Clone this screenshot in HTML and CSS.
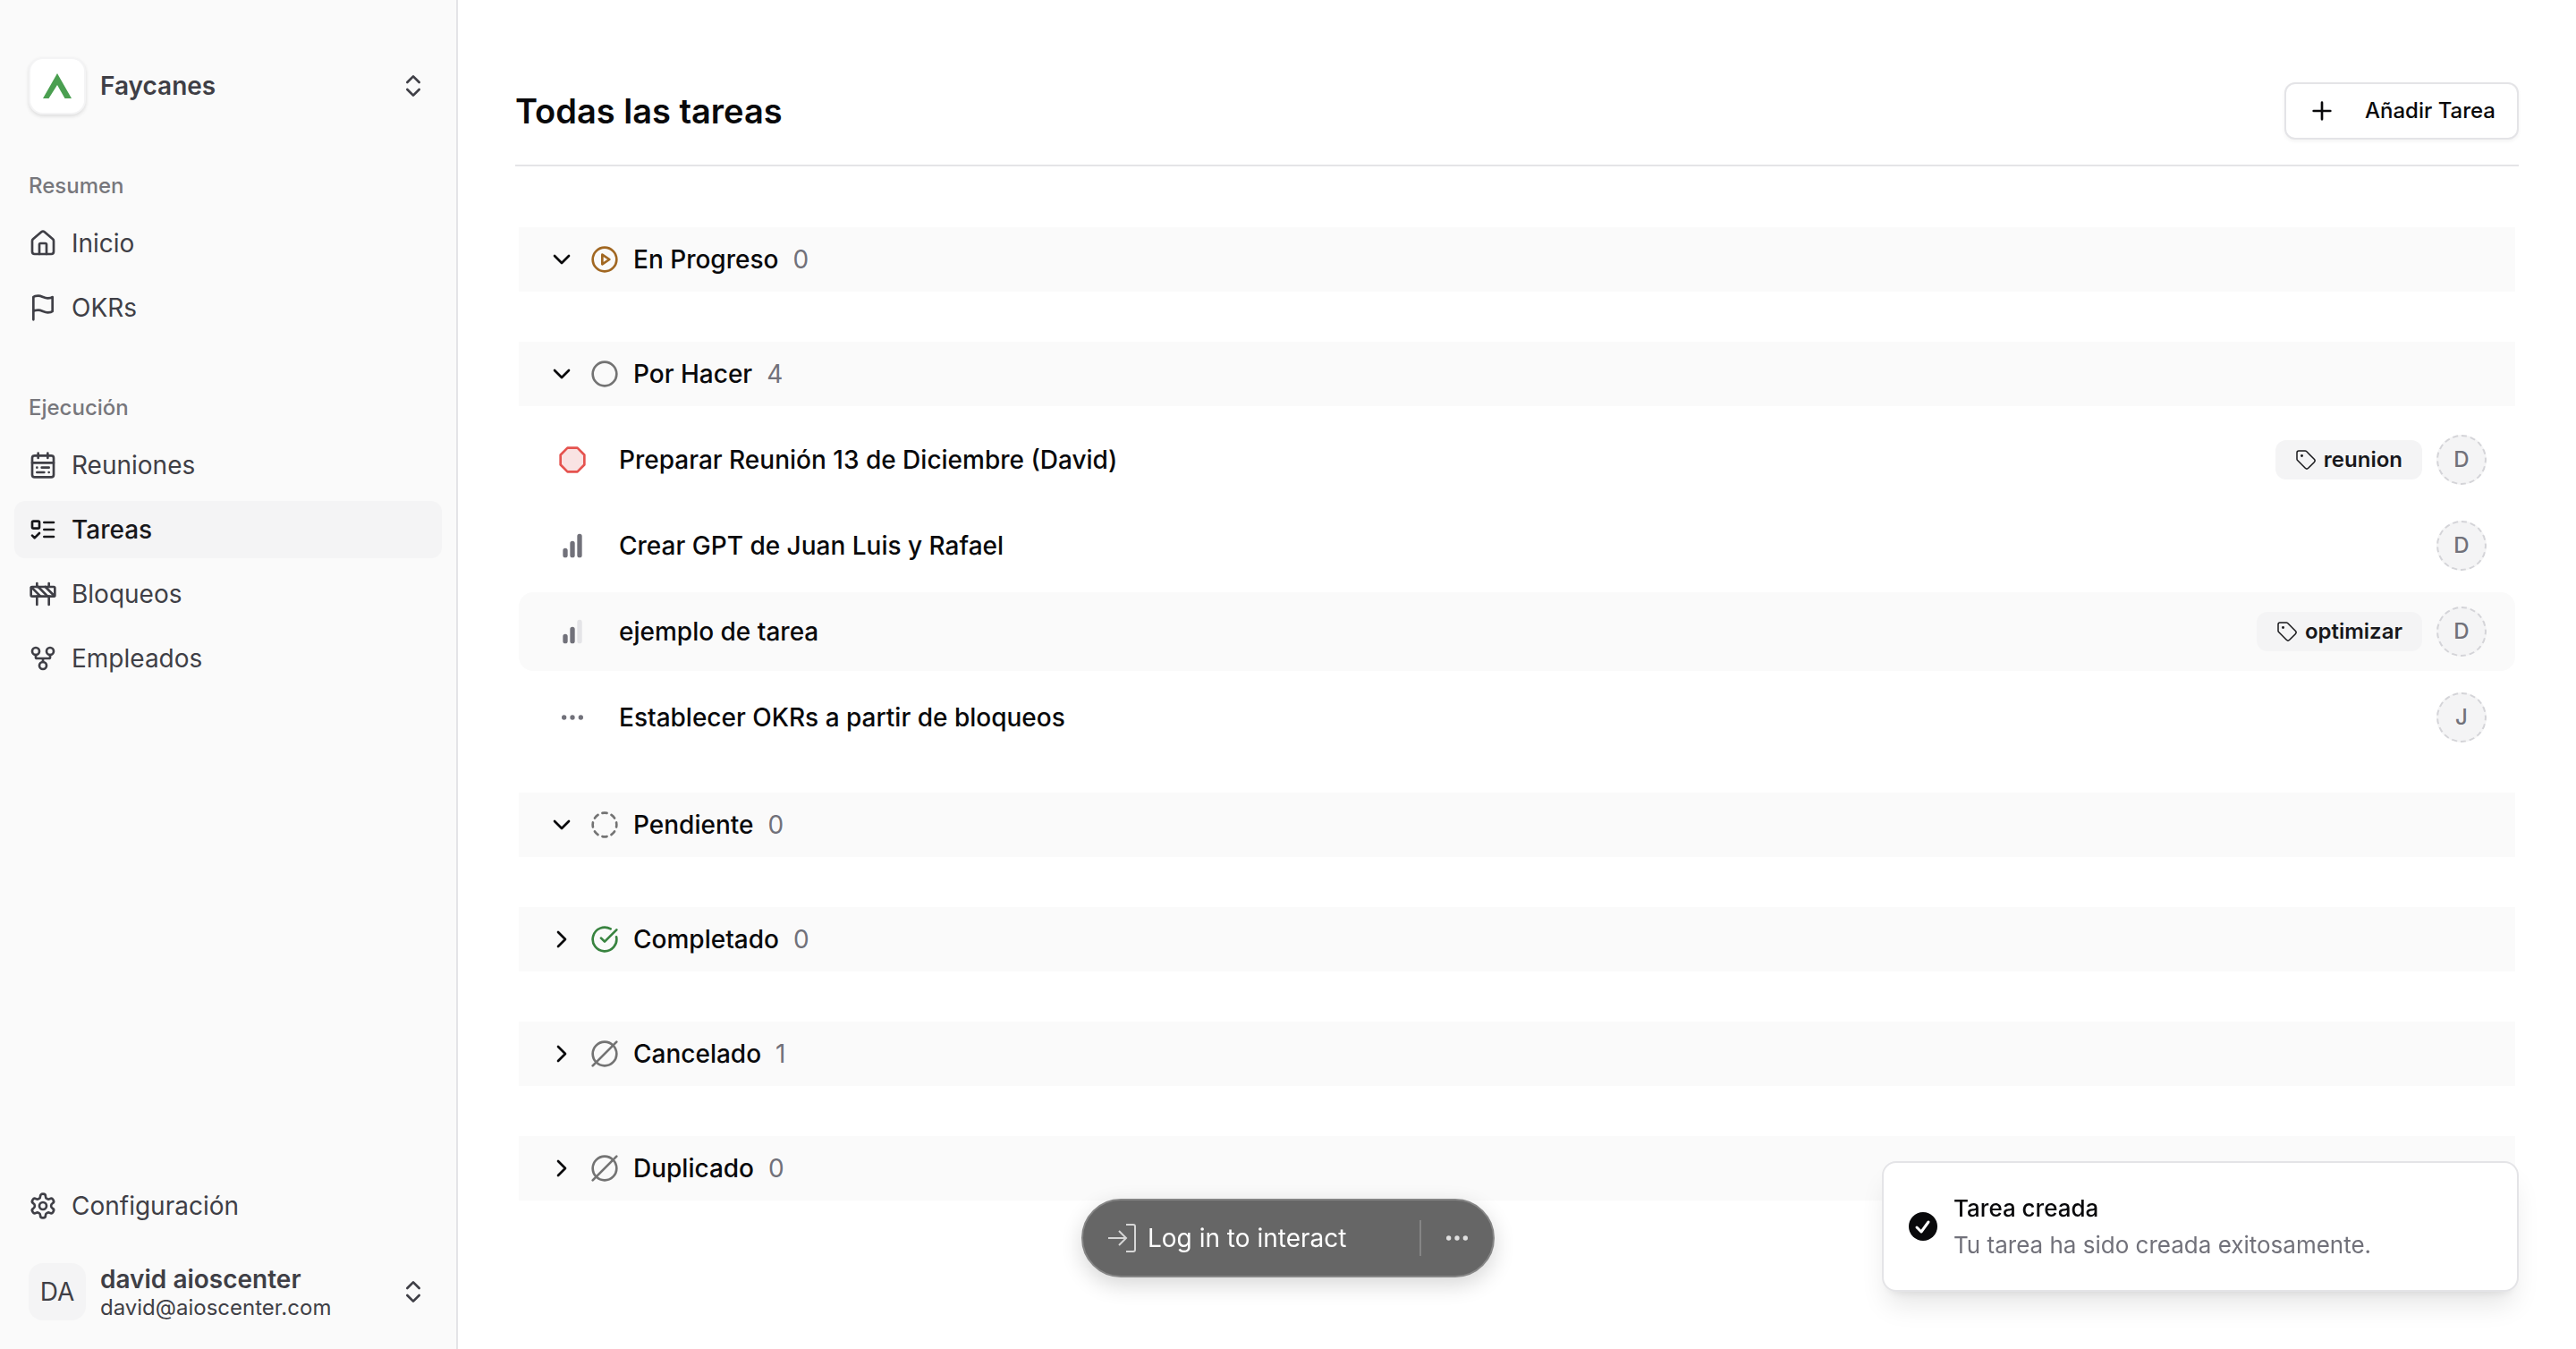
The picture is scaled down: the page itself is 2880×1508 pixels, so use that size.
FILE: index.html
```html
<!DOCTYPE html>
<html lang="es">
<head>
    <meta charset="UTF-8">
    <meta name="viewport" content="width=device-width, initial-scale=1.0">
    <title>Todas las tareas</title>
    <link rel="stylesheet" href="styles.css">
</head>
<body>
    <!-- Icon sprite -->
    <svg class="sprite" aria-hidden="true">
        <symbol id="i-updown" viewBox="0 0 24 24"><path d="m7 15 5 5 5-5M7 9l5-5 5 5"/></symbol>
        <symbol id="i-home" viewBox="0 0 24 24"><path d="M15 21v-8a1 1 0 0 0-1-1h-4a1 1 0 0 0-1 1v8"/><path d="M3 10a2 2 0 0 1 .709-1.528l7-5.999a2 2 0 0 1 2.582 0l7 5.999A2 2 0 0 1 21 10v9a2 2 0 0 1-2 2H5a2 2 0 0 1-2-2z"/></symbol>
        <symbol id="i-flag" viewBox="0 0 24 24"><path d="M4 15s1-1 4-1 5 2 8 2 4-1 4-1V3s-1 1-4 1-5-2-8-2-4 1-4 1zM4 22v-7"/></symbol>
        <symbol id="i-calendar" viewBox="0 0 24 24"><rect x="3" y="4" width="18" height="18" rx="2"/><path d="M16 2v4M3 10h18M8 2v4M17 14h-6M13 18H7M7 14h.01M17 18h.01"/></symbol>
        <symbol id="i-todo" viewBox="0 0 24 24"><rect x="3" y="5" width="6" height="6" rx="1"/><path d="m3 17 2 2 4-4M13 6h8M13 12h8M13 18h8"/></symbol>
        <symbol id="i-barrier" viewBox="0 0 24 24"><rect x="2" y="6" width="20" height="8" rx="1"/><path d="M17 14v7M7 14v7M17 3v3M7 3v3M10 14 2.3 6.3M14 6l7.7 7.7M8 6l8 8"/></symbol>
        <symbol id="i-fork" viewBox="0 0 24 24"><circle cx="12" cy="18" r="3"/><circle cx="6" cy="6" r="3"/><circle cx="18" cy="6" r="3"/><path d="M18 9v2c0 .6-.4 1-1 1H7c-.6 0-1-.4-1-1V9M12 12v3"/></symbol>
        <symbol id="i-gear" viewBox="0 0 24 24"><path d="M12.22 2h-.44a2 2 0 0 0-2 2v.18a2 2 0 0 1-1 1.73l-.43.25a2 2 0 0 1-2 0l-.15-.08a2 2 0 0 0-2.73.73l-.22.38a2 2 0 0 0 .73 2.73l.15.1a2 2 0 0 1 1 1.72v.51a2 2 0 0 1-1 1.74l-.15.09a2 2 0 0 0-.73 2.73l.22.38a2 2 0 0 0 2.73.73l.15-.08a2 2 0 0 1 2 0l.43.25a2 2 0 0 1 1 1.73V20a2 2 0 0 0 2 2h.44a2 2 0 0 0 2-2v-.18a2 2 0 0 1 1-1.73l.43-.25a2 2 0 0 1 2 0l.15.08a2 2 0 0 0 2.73-.73l.22-.39a2 2 0 0 0-.73-2.73l-.15-.08a2 2 0 0 1-1-1.74v-.5a2 2 0 0 1 1-1.74l.15-.09a2 2 0 0 0 .73-2.73l-.22-.38a2 2 0 0 0-2.73-.73l-.15.08a2 2 0 0 1-2 0l-.43-.25a2 2 0 0 1-1-1.73V4a2 2 0 0 0-2-2z"/><circle cx="12" cy="12" r="3"/></symbol>
        <symbol id="i-plus" viewBox="0 0 24 24"><path d="M5 12h14M12 5v14"/></symbol>
        <symbol id="i-down" viewBox="0 0 24 24"><path d="m6 9 6 6 6-6"/></symbol>
        <symbol id="i-right" viewBox="0 0 24 24"><path d="m9 18 6-6-6-6"/></symbol>
        <symbol id="i-play" viewBox="0 0 24 24"><circle cx="12" cy="12" r="10"/><path d="m10 8 6 4-6 4z"/></symbol>
        <symbol id="i-circle" viewBox="0 0 24 24"><circle cx="12" cy="12" r="10"/></symbol>
        <symbol id="i-dashed" viewBox="0 0 24 24"><path d="M10.1 2.182a10 10 0 0 1 3.8 0M13.9 21.818a10 10 0 0 1-3.8 0M17.609 3.721a10 10 0 0 1 2.69 2.7M2.182 13.9a10 10 0 0 1 0-3.8M20.279 17.609a10 10 0 0 1-2.7 2.69M21.818 10.1a10 10 0 0 1 0 3.8M3.721 6.391a10 10 0 0 1 2.7-2.69M6.391 20.279a10 10 0 0 1-2.69-2.7"/></symbol>
        <symbol id="i-check" viewBox="0 0 24 24"><path d="M21.801 10A10 10 0 1 1 17 3.335M9 11l3 3L22 4"/></symbol>
        <symbol id="i-slash" viewBox="0 0 24 24"><circle cx="12" cy="12" r="10"/><path d="M22 2 2 22"/></symbol>
        <symbol id="i-octagon" viewBox="0 0 24 24"><path d="M7.86 2h8.28L22 7.86v8.28L16.14 22H7.86L2 16.14V7.86z"/></symbol>
        <symbol id="i-dots" viewBox="0 0 24 24"><circle cx="12" cy="12" r="1"/><circle cx="19" cy="12" r="1"/><circle cx="5" cy="12" r="1"/></symbol>
        <symbol id="i-tag" viewBox="0 0 24 24"><path d="M12.586 2.586A2 2 0 0 0 11.172 2H4a2 2 0 0 0-2 2v7.172a2 2 0 0 0 .586 1.414l8.704 8.704a2.426 2.426 0 0 0 3.42 0l6.58-6.58a2.426 2.426 0 0 0 0-3.42z"/><circle cx="7.5" cy="7.5" r=".7" fill="currentColor"/></symbol>
    </svg>

    <div class="app">
        <aside class="sidebar">
            <button class="switcher" type="button">
                <span class="logo">
                    <svg width="32" height="28" viewBox="0 0 32 28"><path fill="#4a9f50" d="M16 0 32 28h-7.500L16 13 6.500 28H0z"/></svg>
                </span>
                <span class="switcher-name">Faycanes</span>
                <svg class="icon"><use href="#i-updown"/></svg>
            </button>

            <nav class="nav-group">
                <h2 class="nav-label">Resumen</h2>
                <a class="nav-item" href="#inicio"><svg class="icon"><use href="#i-home"/></svg>Inicio</a>
                <a class="nav-item" href="#okrs"><svg class="icon"><use href="#i-flag"/></svg>OKRs</a>
            </nav>
            <nav class="nav-group">
                <h2 class="nav-label">Ejecución</h2>
                <a class="nav-item" href="#reuniones"><svg class="icon"><use href="#i-calendar"/></svg>Reuniones</a>
                <a class="nav-item active" href="#tareas" aria-current="page"><svg class="icon"><use href="#i-todo"/></svg>Tareas</a>
                <a class="nav-item" href="#bloqueos"><svg class="icon"><use href="#i-barrier"/></svg>Bloqueos</a>
                <a class="nav-item" href="#empleados"><svg class="icon"><use href="#i-fork"/></svg>Empleados</a>
            </nav>

            <nav class="nav-group nav-bottom">
                <a class="nav-item" href="#configuracion"><svg class="icon"><use href="#i-gear"/></svg>Configuración</a>
            </nav>
            <button class="switcher" type="button">
                <span class="initials">DA</span>
                <span class="user">
                    <span class="switcher-name">david aioscenter</span>
                    <span class="user-email">david@aioscenter.com</span>
                </span>
                <svg class="icon"><use href="#i-updown"/></svg>
            </button>
        </aside>

        <main class="main">
            <header class="page-header">
                <h1>Todas las tareas</h1>
                <button class="add-btn" type="button"><svg class="icon"><use href="#i-plus"/></svg>Añadir Tarea</button>
            </header>

            <div class="board">
                <section class="group">
                    <button class="group-header" type="button" aria-expanded="true">
                        <svg class="icon"><use href="#i-down"/></svg>
                        <svg class="icon status-progress"><use href="#i-play"/></svg>
                        <span>En Progreso</span><span class="count">0</span>
                    </button>
                </section>

                <section class="group">
                    <button class="group-header" type="button" aria-expanded="true">
                        <svg class="icon"><use href="#i-down"/></svg>
                        <svg class="icon status-muted"><use href="#i-circle"/></svg>
                        <span>Por Hacer</span><span class="count">4</span>
                    </button>
                    <ul class="tasks">
                        <li class="task">
                            <button class="priority" type="button" aria-label="Urgente"><svg class="icon urgent"><use href="#i-octagon"/></svg></button>
                            <span class="task-title">Preparar Reunión 13 de Diciembre (David)</span>
                            <span class="tag"><svg class="icon"><use href="#i-tag"/></svg>reunion</span>
                            <span class="avatar">D</span>
                        </li>
                        <li class="task">
                            <button class="priority" type="button" aria-label="Alta"><svg class="icon bars" viewBox="0 0 24 24"><path d="M6 20v-4M12 20V10M18 20V4"/></svg></button>
                            <span class="task-title">Crear GPT de Juan Luis y Rafael</span>
                            <span class="avatar">D</span>
                        </li>
                        <li class="task hovered">
                            <button class="priority" type="button" aria-label="Media"><svg class="icon bars" viewBox="0 0 24 24"><path d="M6 20v-4M12 20V10"/><path class="bar-off" d="M18 20V4"/></svg></button>
                            <span class="task-title">ejemplo de tarea</span>
                            <span class="tag"><svg class="icon"><use href="#i-tag"/></svg>optimizar</span>
                            <span class="avatar">D</span>
                        </li>
                        <li class="task">
                            <button class="priority" type="button" aria-label="Sin prioridad"><svg class="icon"><use href="#i-dots"/></svg></button>
                            <span class="task-title">Establecer OKRs a partir de bloqueos</span>
                            <span class="avatar">J</span>
                        </li>
                    </ul>
                </section>

                <section class="group">
                    <button class="group-header" type="button" aria-expanded="true">
                        <svg class="icon"><use href="#i-down"/></svg>
                        <svg class="icon status-muted"><use href="#i-dashed"/></svg>
                        <span>Pendiente</span><span class="count">0</span>
                    </button>
                </section>

                <section class="group">
                    <button class="group-header" type="button" aria-expanded="false">
                        <svg class="icon"><use href="#i-right"/></svg>
                        <svg class="icon status-done"><use href="#i-check"/></svg>
                        <span>Completado</span><span class="count">0</span>
                    </button>
                </section>

                <section class="group">
                    <button class="group-header" type="button" aria-expanded="false">
                        <svg class="icon"><use href="#i-right"/></svg>
                        <svg class="icon status-muted"><use href="#i-slash"/></svg>
                        <span>Cancelado</span><span class="count">1</span>
                    </button>
                </section>

                <section class="group">
                    <button class="group-header" type="button" aria-expanded="false">
                        <svg class="icon"><use href="#i-right"/></svg>
                        <svg class="icon status-muted"><use href="#i-slash"/></svg>
                        <span>Duplicado</span><span class="count">0</span>
                    </button>
                </section>
            </div>
        </main>
    </div>

    <div class="login-bar">
        <button class="login-btn" type="button">
            <svg width="32" height="32" viewBox="0 0 32 32"><path d="M0 16h20M12 8l8 8-8 8M20 1h8a2 2 0 0 1 2 2v26a2 2 0 0 1-2 2h-8"/></svg>
            Log in to interact
        </button>
        <button class="login-more" type="button" aria-label="Más opciones"><svg class="icon"><use href="#i-dots"/></svg></button>
    </div>

    <div class="toast" role="status">
        <svg width="32" height="32" viewBox="0 0 32 32"><circle cx="16" cy="16" r="16" fill="#09090b"/><path d="m9 17 5 5 8-11" fill="none" stroke="#fff" stroke-width="3" stroke-linecap="round" stroke-linejoin="round"/></svg>
        <div class="toast-text">
            <p class="toast-title">Tarea creada</p>
            <p class="toast-desc">Tu tarea ha sido creada exitosamente.</p>
        </div>
    </div>
</body>
</html>
```

FILE: styles.css
```css
* {
    box-sizing: border-box;
}
body {
    margin: 0;
    font-family: Inter, "Liberation Sans", sans-serif;
    font-size: 28px;
    line-height: 40px;
    color: #09090b;
    background-color: #fff;
}
h1, h2, p, ul {
    margin: 0;
    padding: 0;
}
button {
    padding: 0;
    border: none;
    background: none;
    font: inherit;
    color: inherit;
    text-align: left;
    cursor: pointer;
}
.sprite {
    display: none;
}
.icon {
    flex: none;
    width: 32px;
    height: 32px;
    fill: none;
    stroke: currentColor;
    stroke-width: 2;
    stroke-linecap: round;
    stroke-linejoin: round;
}
.app {
    display: flex;
    min-height: 100vh;
}

/* Sidebar */
.sidebar {
    display: flex;
    flex-direction: column;
    flex: none;
    width: 512px;
    padding: 48px 16px 16px;
    border-right: 2px solid #e4e4e7;
    background-color: #fafafa;
    color: #3f3f46;
}
.switcher {
    display: flex;
    align-items: center;
    gap: 16px;
    padding: 16px;
}
.switcher .icon {
    margin-left: auto;
}
.switcher-name {
    font-weight: 600;
    line-height: 36px;
}
.logo, .initials {
    display: flex;
    align-items: center;
    justify-content: center;
    width: 64px;
    height: 64px;
    border-radius: 16px;
}
.logo {
    border: 2px solid #f4f4f5;
    background-color: #fff;
    box-shadow: 0 2px 4px rgba(0, 0, 0, 0.12);
}
.initials {
    background-color: #f4f4f5;
}
.user {
    display: flex;
    flex-direction: column;
}
.user-email {
    font-size: 24px;
    line-height: 28px;
}
.nav-group {
    display: flex;
    flex-direction: column;
    gap: 8px;
    padding-top: 32px;
    margin-bottom: 16px;
}
.nav-label {
    height: 64px;
    margin-bottom: -8px;
    padding: 0 16px;
    font-size: 24px;
    font-weight: 500;
    line-height: 64px;
    color: #77777c;
}
.nav-item {
    display: flex;
    align-items: center;
    gap: 16px;
    height: 64px;
    padding: 0 16px;
    border-radius: 12px;
    color: inherit;
    text-decoration: none;
}
.nav-item.active {
    background-color: #f4f4f5;
    font-weight: 500;
    color: #18181b;
}
.nav-bottom {
    margin-top: auto;
}

/* Main */
.main {
    flex: 1;
    min-width: 0;
    padding: 92px 64px 64px;
}
.page-header {
    display: flex;
    align-items: center;
    justify-content: space-between;
    padding-bottom: 28px;
    border-bottom: 2px solid #e4e4e7;
}
.page-header h1 {
    font-size: 38px;
    font-weight: 600;
    line-height: 56px;
}
.add-btn {
    display: flex;
    align-items: center;
    gap: 32px;
    height: 64px;
    padding: 0 24px;
    border: 2px solid #e4e4e7;
    border-radius: 12px;
    background-color: #fff;
    font-size: 24px;
    font-weight: 500;
    box-shadow: 0 2px 4px rgba(0, 0, 0, 0.05);
}
.board {
    padding: 68px 4px 0;
}
.group {
    margin-bottom: 56px;
}
.group-header {
    display: flex;
    align-items: center;
    gap: 16px;
    width: 100%;
    height: 72px;
    padding: 0 32px;
    background-color: #fafafa;
    font-weight: 500;
}
.count {
    font-weight: 400;
    color: #71717a;
}
.status-progress {
    color: #a16721;
}
.status-muted {
    color: #737373;
}
.status-done {
    color: #38833f;
}
.tasks {
    display: flex;
    flex-direction: column;
    gap: 8px;
    margin: 16px 0 -16px;
    list-style: none;
}
.task {
    display: flex;
    align-items: center;
    gap: 16px;
    height: 88px;
    padding: 0 32px;
    border-radius: 16px;
}
.task.hovered {
    background-color: #fafafa;
}
.priority {
    display: flex;
    justify-content: center;
    width: 56px;
    color: #71717a;
}
.urgent {
    color: #e5534f;
    fill: #f9e3e3;
}
.bars {
    stroke-width: 4;
}
.bar-off {
    stroke: #e4e4e7;
}
.task-title {
    flex: 1;
    padding-left: 8px;
    font-weight: 500;
}
.tag {
    display: flex;
    align-items: center;
    gap: 8px;
    height: 44px;
    padding: 0 22px;
    border-radius: 12px;
    background-color: #f4f4f5;
    font-size: 24px;
    font-weight: 600;
    color: #18181b;
}
.tag .icon {
    width: 24px;
    height: 24px;
    stroke-width: 1.5;
}
.avatar {
    display: flex;
    align-items: center;
    justify-content: center;
    width: 56px;
    height: 56px;
    border: 2px dashed #d4d4d8;
    border-radius: 50%;
    background-color: #f4f4f5;
    font-size: 24px;
    font-weight: 500;
    color: #71717a;
}

/* Floating pieces */
.login-bar {
    position: fixed;
    left: 50%;
    bottom: 80px;
    display: flex;
    align-items: center;
    width: 462px;
    height: 88px;
    transform: translateX(-50%);
    border: 2px solid #858585;
    border-radius: 44px;
    background-color: #666;
    color: #fff;
    box-shadow: 0 8px 24px rgba(0, 0, 0, 0.16);
}
.login-btn {
    display: flex;
    align-items: center;
    gap: 12px;
    flex: 1;
    padding-left: 28px;
}
.login-btn svg {
    fill: none;
    stroke: #d6d6d6;
    stroke-width: 2;
}
.login-more {
    display: flex;
    align-items: center;
    height: 40px;
    padding: 0 24px;
    border-left: 2px solid #858585;
    color: #e0e0e0;
}
.toast {
    position: fixed;
    right: 64px;
    bottom: 64px;
    display: flex;
    align-items: center;
    gap: 18px;
    width: 712px;
    padding: 32px 28px;
    border: 2px solid #e4e4e7;
    border-radius: 16px;
    background-color: #fff;
    font-size: 26px;
    box-shadow: 0 20px 30px -6px rgba(0, 0, 0, 0.1), 0 8px 12px -8px rgba(0, 0, 0, 0.1);
}
.toast-title {
    margin-bottom: 4px;
    font-weight: 500;
    line-height: 38px;
}
.toast-desc {
    line-height: 36px;
    color: #71717a;
}
```
